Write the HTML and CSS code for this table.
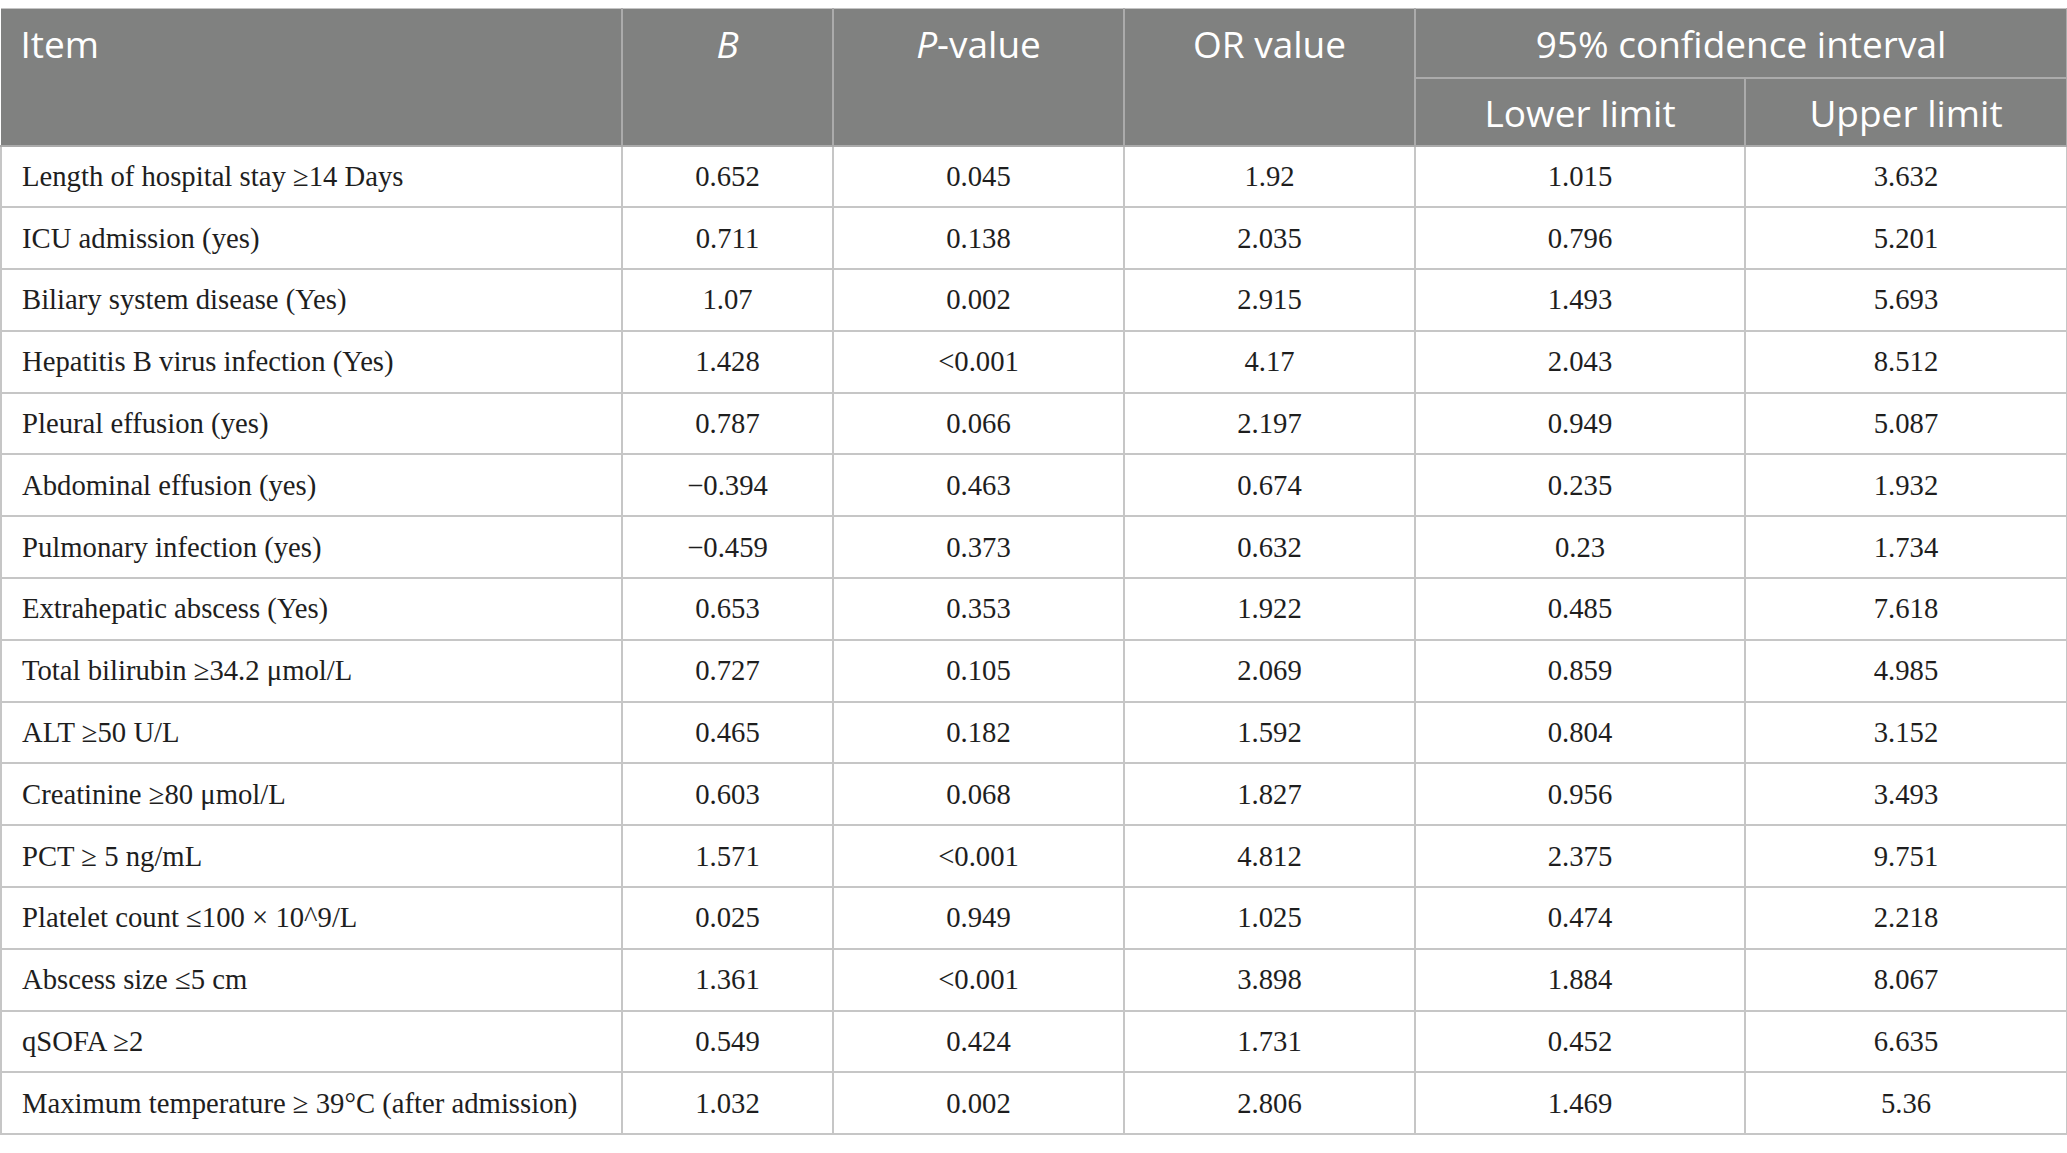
FILE: index.html
```html
<!DOCTYPE html>
<html>
<head>
<meta charset="utf-8">
<link rel="stylesheet" href="styles.css">
</head>
<body>
<table class="data">
  <colgroup>
    <col class="c-item"><col class="c-b"><col class="c-p"><col class="c-or"><col class="c-lo"><col class="c-up">
  </colgroup>
  <thead>
    <tr class="h1">
      <th rowspan="2" class="left">Item</th>
      <th rowspan="2"><i>B</i></th>
      <th rowspan="2"><i>P</i>-value</th>
      <th rowspan="2">OR value</th>
      <th colspan="2" class="mid">95% confidence interval</th>
    </tr>
    <tr class="h2">
      <th class="mid">Lower limit</th>
      <th class="mid">Upper limit</th>
    </tr>
  </thead>
  <tbody>
    <tr><td>Length of hospital stay ≥14 Days</td><td>0.652</td><td>0.045</td><td>1.92</td><td>1.015</td><td>3.632</td></tr>
    <tr><td>ICU admission (yes)</td><td>0.711</td><td>0.138</td><td>2.035</td><td>0.796</td><td>5.201</td></tr>
    <tr><td>Biliary system disease (Yes)</td><td>1.07</td><td>0.002</td><td>2.915</td><td>1.493</td><td>5.693</td></tr>
    <tr><td>Hepatitis B virus infection (Yes)</td><td>1.428</td><td>&lt;0.001</td><td>4.17</td><td>2.043</td><td>8.512</td></tr>
    <tr><td>Pleural effusion (yes)</td><td>0.787</td><td>0.066</td><td>2.197</td><td>0.949</td><td>5.087</td></tr>
    <tr><td>Abdominal effusion (yes)</td><td>−0.394</td><td>0.463</td><td>0.674</td><td>0.235</td><td>1.932</td></tr>
    <tr><td>Pulmonary infection (yes)</td><td>−0.459</td><td>0.373</td><td>0.632</td><td>0.23</td><td>1.734</td></tr>
    <tr><td>Extrahepatic abscess (Yes)</td><td>0.653</td><td>0.353</td><td>1.922</td><td>0.485</td><td>7.618</td></tr>
    <tr><td>Total bilirubin ≥34.2 μmol/L</td><td>0.727</td><td>0.105</td><td>2.069</td><td>0.859</td><td>4.985</td></tr>
    <tr><td>ALT ≥50 U/L</td><td>0.465</td><td>0.182</td><td>1.592</td><td>0.804</td><td>3.152</td></tr>
    <tr><td>Creatinine ≥80 μmol/L</td><td>0.603</td><td>0.068</td><td>1.827</td><td>0.956</td><td>3.493</td></tr>
    <tr><td>PCT ≥ 5 ng/mL</td><td>1.571</td><td>&lt;0.001</td><td>4.812</td><td>2.375</td><td>9.751</td></tr>
    <tr><td>Platelet count ≤100 × 10^9/L</td><td>0.025</td><td>0.949</td><td>1.025</td><td>0.474</td><td>2.218</td></tr>
    <tr><td>Abscess size ≤5 cm</td><td>1.361</td><td>&lt;0.001</td><td>3.898</td><td>1.884</td><td>8.067</td></tr>
    <tr><td>qSOFA ≥2</td><td>0.549</td><td>0.424</td><td>1.731</td><td>0.452</td><td>6.635</td></tr>
    <tr><td>Maximum temperature ≥ 39°C (after admission)</td><td>1.032</td><td>0.002</td><td>2.806</td><td>1.469</td><td>5.36</td></tr>
  </tbody>
</table>
</body>
</html>
```
FILE: styles.css
```css
html, body {
  margin: 0;
  padding: 0;
  background: #ffffff;
}
body {
  padding-top: 8px;
}
.data {
  width: 2066px;
  border-collapse: collapse;
  table-layout: fixed;
}
.c-item { width: 621px; }
.c-b { width: 211px; }
.c-p { width: 291px; }
.c-or { width: 291px; }
.c-lo { width: 330px; }
.c-up { width: 322px; }

.data th {
  background: #808180;
  color: #ffffff;
  font-family: "Open Sans", "Noto Sans", sans-serif;
  font-weight: 400;
  font-size: 37px;
  text-align: center;
  vertical-align: top;
  border: 2px solid #ababab;
  padding: 0 10px;
  line-height: 44px;
  box-sizing: border-box;
}
.data thead tr.h1 th { padding-top: 13px; }
.data thead tr.h1 th.mid { height: 69px; }
.data thead tr.h2 th { height: 68px; padding-top: 12px; }
.data th.left { text-align: left; padding-left: 19px; }
.data th i { font-style: italic; }
.data thead tr.h1 th { border-top: 1px solid #c4c4c4; }
.data thead tr.h1 th:first-child { border-left: 1px solid #808180; }

.data td {
  font-family: "Liberation Serif", "Times New Roman", serif;
  font-size: 28.7px;
  color: #1e1e1e;
  text-align: center;
  vertical-align: middle;
  height: 61.8px;
  padding: 0 10px;
  border: 2px solid #c6c6c6;
  box-sizing: border-box;
}
.data td:first-child {
  text-align: left;
  padding-left: 20px;
}
```
